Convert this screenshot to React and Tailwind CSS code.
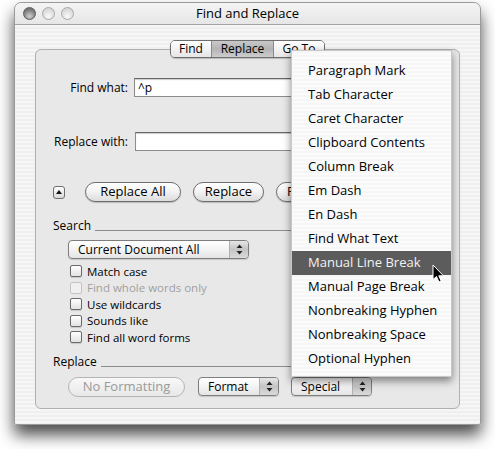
const menuItems = [
  'Paragraph Mark',
  'Tab Character',
  'Caret Character',
  'Clipboard Contents',
  'Column Break',
  'Em Dash',
  'En Dash',
  'Find What Text',
  'Manual Line Break',
  'Manual Page Break',
  'Nonbreaking Hyphen',
  'Nonbreaking Space',
  'Optional Hyphen',
];

const checks = [
  { label: 'Match case' },
  { label: 'Find whole words only', disabled: true },
  { label: 'Use wildcards' },
  { label: 'Sounds like' },
  { label: 'Find all word forms' },
];

const stripes =
  'bg-[repeating-linear-gradient(180deg,#efefef_0px,#efefef_2px,#f6f6f6_2px,#f6f6f6_4px)]';

const Arrows = () => (
  <svg width="7" height="11" viewBox="0 0 7 11">
    <path d="M3.5 0.5 L6.5 4 L0.5 4 Z" fill="#222" />
    <path d="M3.5 10.5 L6.5 7 L0.5 7 Z" fill="#222" />
  </svg>
);

const Popup = ({ label, width }) => (
  <div
    className={`flex h-[19px] ${width} rounded-[4px] border border-[#7d7d7d] overflow-hidden bg-gradient-to-b from-white via-[#f4f4f4] to-[#e4e4e4] shadow-[0_1px_1px_rgba(0,0,0,0.15)]`}
  >
    <div className="flex-1 flex items-center pl-[9px] text-[12px] text-black">{label}</div>
    <div className="w-[19px] flex items-center justify-center border-l border-[#b0b0b0] bg-gradient-to-b from-[#e6e6e6] via-[#c4c4c4] to-[#dadada]">
      <Arrows />
    </div>
  </div>
);

const Pill = ({ label, width, disabled }) => (
  <div
    className={`flex h-[20px] ${width} items-center justify-center rounded-full border text-[13px] ${
      disabled
        ? 'border-[#b4b4b4] text-[#9a9a9a] bg-gradient-to-b from-[#f8f8f8] to-[#e8e8e8]'
        : 'border-[#6e6e6e] text-black bg-gradient-to-b from-white via-[#f2f2f2] to-[#dcdcdc] shadow-[0_1px_1px_rgba(0,0,0,0.2)]'
    }`}
  >
    {label}
  </div>
);

const Heading = ({ label }) => (
  <div className="flex items-end h-[14px] pl-[17px] pr-[15px]">
    <span className="text-[12px] leading-[14px] text-black">{label}</span>
    <div className="flex-1 ml-[4px] mb-[2px] h-px bg-[#8c8c8c]" />
  </div>
);

export default function App() {
  return (
    <div
      className="w-[495px] h-[449px] bg-white overflow-hidden pt-[2px]"
      style={{ fontFamily: '"Open Sans", "DejaVu Sans", sans-serif' }}
    >
      <div
        className={`relative ml-[14px] w-[467px] h-[423px] flex flex-col rounded-t-[7px] rounded-b-[2px] border border-[#9a9a9a] ${stripes} shadow-[0_10px_16px_rgba(0,0,0,0.7)]`}
      >
        {/* title bar */}
        <div className="relative h-[21px] flex items-center justify-center rounded-t-[7px] bg-gradient-to-b from-[#f4f4f4] to-[#e6e6e6]">
          <div className="absolute left-[8px] top-[4px] flex gap-[6px]">
            <div className="w-[13px] h-[13px] rounded-full border border-[#5a5a5a] bg-[radial-gradient(circle_at_50%_75%,#d0d0d0,#808080_60%,#626262)]" />
            <div className="w-[13px] h-[13px] rounded-full border border-[#a8a8a8] bg-[radial-gradient(circle_at_50%_75%,#fafafa,#dcdcdc_60%,#cfcfcf)]" />
            <div className="w-[13px] h-[13px] rounded-full border border-[#a8a8a8] bg-[radial-gradient(circle_at_50%_75%,#fafafa,#dcdcdc_60%,#cfcfcf)]" />
          </div>
          <span className="text-[13px] text-black">Find and Replace</span>
        </div>
        <div className="h-px bg-[#a4a4a4]" />

        <div className="flex-1 flex flex-col px-[20px] pt-[15px] pb-[15px]">
          {/* tabs */}
          <div className="relative z-10 flex justify-center">
            <div className="flex h-[18px] rounded-[5px] border border-[#6e6e6e] overflow-hidden text-[12px] shadow-[0_1px_1px_rgba(0,0,0,0.2)]">
              <div className="w-[40px] flex items-center justify-center bg-gradient-to-b from-white to-[#e6e6e6]">Find</div>
              <div className="w-[63px] flex items-center justify-center border-x border-[#8a8a8a] bg-gradient-to-b from-[#c8c8c8] via-[#b4b4b4] to-[#cdcdcd]">
                Replace
              </div>
              <div className="w-[50px] flex items-center justify-center bg-gradient-to-b from-white to-[#e6e6e6]">Go To</div>
            </div>
          </div>

          {/* group box */}
          <div className="-mt-[9px] flex-1 flex flex-col rounded-[6px] border border-[#b0b0b0] bg-[#e8e8e8] pt-[28px]">
            <div className="flex items-center h-[19px]">
              <div className="w-[92px] text-right text-[12px]">Find what:</div>
              <div className="ml-[6px] w-[310px] h-[19px] border border-[#8c8c8c] border-t-[#666] bg-white flex items-center px-[3px] text-[12px] shadow-[inset_0_1px_1px_rgba(0,0,0,0.2)]">
                ^p
              </div>
            </div>
            <div className="mt-[35px] flex items-center h-[19px]">
              <div className="w-[92px] text-right text-[12px]">Replace with:</div>
              <div className="ml-[7px] w-[309px] h-[19px] border border-[#8c8c8c] border-t-[#666] bg-white shadow-[inset_0_1px_1px_rgba(0,0,0,0.2)]" />
            </div>

            <div className="mt-[31px] flex items-center h-[20px] pl-[17px]">
              <div className="w-[12px] h-[13px] rounded-[3px] border border-[#6e6e6e] bg-gradient-to-b from-white to-[#d8d8d8] flex items-center justify-center">
                <svg width="6" height="4" viewBox="0 0 6 4">
                  <path d="M3 0 L6 4 L0 4 Z" fill="#111" />
                </svg>
              </div>
              <div className="ml-[20px]">
                <Pill label="Replace All" width="w-[96px]" />
              </div>
              <div className="ml-[12px]">
                <Pill label="Replace" width="w-[71px]" />
              </div>
              <div className="ml-[12px]">
                <Pill label="Find Next" width="w-[80px]" />
              </div>
            </div>

            <div className="mt-[17px]">
              <Heading label="Search" />
            </div>
            <div className="mt-[7px] pl-[32px]">
              <Popup label="Current Document All" width="w-[181px]" />
            </div>

            <div className="mt-[4px] pl-[34px] flex flex-col">
              {checks.map((c) => (
                <div key={c.label} className="h-[16.5px] flex items-center">
                  <div
                    className={`w-[12px] h-[12px] rounded-[2px] border ${
                      c.disabled
                        ? 'border-[#c4c4c4] bg-[#f0f0f0]'
                        : 'border-[#6a6a6a] bg-gradient-to-b from-white to-[#e2e2e2] shadow-[0_1px_1px_rgba(0,0,0,0.15)]'
                    }`}
                  />
                  <span
                    className={`ml-[5px] text-[11.5px] ${c.disabled ? 'text-[#a0a0a0]' : 'text-black'}`}
                  >
                    {c.label}
                  </span>
                </div>
              ))}
            </div>

            <div className="mt-[9px]">
              <Heading label="Replace" />
            </div>
            <div className="mt-[8px] pl-[32px] flex items-center">
              <Pill label="No Formatting" width="w-[117px]" disabled />
              <div className="ml-[13px]">
                <Popup label="Format" width="w-[81px]" />
              </div>
              <div className="ml-[12px]">
                <Popup label="Special" width="w-[81px]" />
              </div>
            </div>
          </div>
        </div>

        {/* special menu */}
        <div className="absolute left-[276px] top-[47px] w-[161px] pt-[8px] pb-[5px] bg-[repeating-linear-gradient(180deg,#f6f6f6_0px,#f6f6f6_2px,#fbfbfb_2px,#fbfbfb_4px)] border border-[#c8c8c8] shadow-[0_4px_8px_rgba(0,0,0,0.45)] z-20">
          {menuItems.map((item, i) => (
            <div
              key={item}
              className={`h-[24px] flex items-center pl-[16px] text-[13px] ${
                i === 8 ? 'bg-[#5c5c5c] text-[#f2f2f2]' : 'text-black'
              }`}
            >
              {item}
            </div>
          ))}
        </div>

        {/* mouse pointer */}
        <svg
          className="absolute left-[417px] top-[261px] z-30"
          width="13"
          height="20"
          viewBox="0 0 13 20"
        >
          <path
            d="M1 1 L1 15.5 L4.5 12.5 L7 18 L9.2 17 L6.8 11.8 L11.5 11.8 Z"
            fill="#000"
            stroke="#fff"
            strokeWidth="1"
            strokeLinejoin="round"
          />
        </svg>
      </div>
    </div>
  );
}
